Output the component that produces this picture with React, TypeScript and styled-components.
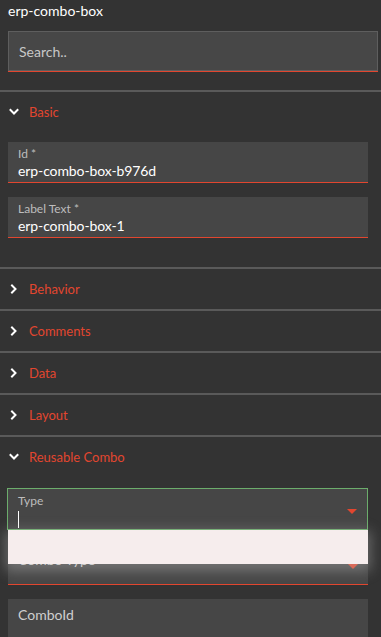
import React from "react";
import { createGlobalStyle, styled } from "styled-components";

const GlobalStyle = createGlobalStyle`
  html, body {
    margin: 0;
    padding: 0;
    background: #333333;
  }
  body {
    font-family: Lato, "Noto Sans", sans-serif;
  }
`;

const RED = "#e2462f";

type SectionProps = {
  title: string;
  open?: boolean;
  children?: React.ReactNode;
};

function Chevron({ open }: { open?: boolean }) {
  return (
    <ChevronIcon width="10" height="10" viewBox="0 0 10 10">
      {open ? (
        <polyline points="1.5,3 5,6.5 8.5,3" />
      ) : (
        <polyline points="3,1.5 6.5,5 3,8.5" />
      )}
    </ChevronIcon>
  );
}

function Section({ title, open, children }: SectionProps) {
  return (
    <SectionWrapper>
      <SectionHeader>
        <Chevron open={open} />
        <SectionTitle>{title}</SectionTitle>
      </SectionHeader>
      {open && <SectionBody>{children}</SectionBody>}
    </SectionWrapper>
  );
}

export default function App() {
  return (
    <Page>
      <GlobalStyle />
      <Top>
        <Title>erp-combo-box</Title>
        <SearchBox>Search..</SearchBox>
      </Top>
      <Section title="Basic" open>
        <Field>
          <FieldLabel>Id *</FieldLabel>
          <FieldValue>erp-combo-box-b976d</FieldValue>
        </Field>
        <Field>
          <FieldLabel>Label Text *</FieldLabel>
          <FieldValue>erp-combo-box-1</FieldValue>
        </Field>
      </Section>
      <Section title="Behavior" />
      <Section title="Comments" />
      <Section title="Data" />
      <Section title="Layout" />
      <Section title="Reusable Combo" open>
        <SelectWrap>
          <FocusedField>
            <FieldLabel>Type</FieldLabel>
            <Caret />
            <DropArrow />
          </FocusedField>
          <DropdownPanel />
        </SelectWrap>
        <Field>
          <Placeholder>Combo Type</Placeholder>
          <DropArrow />
        </Field>
        <Field $plain>
          <Placeholder>ComboId</Placeholder>
        </Field>
      </Section>
    </Page>
  );
}

const Page = styled.div`
  width: 381px;
  height: 637px;
  overflow: hidden;
  background: #333333;
  color: #ffffff;
`;

const Top = styled.div`
  padding: 2px 3px 19px 8px;
`;

const Title = styled.div`
  font-size: 14px;
  line-height: 17px;
  color: #ffffff;
`;

const SearchBox = styled.div`
  margin-top: 12px;
  height: 40px;
  box-sizing: border-box;
  background: #474747;
  border: 1px solid #5e5e5e;
  box-shadow: 0 1px 0 ${RED};
  padding-left: 10px;
  display: flex;
  align-items: center;
  font-size: 14px;
  color: #c8c8c8;
`;

const SectionWrapper = styled.div`
  border-top: 2px solid #5a5a5a;
  &:first-of-type {
    border-top-width: 1px;
  }
`;

const SectionHeader = styled.div`
  height: 40px;
  display: flex;
  align-items: center;
  gap: 10px;
  padding-left: 9px;
`;

const ChevronIcon = styled.svg`
  fill: none;
  stroke: #ffffff;
  stroke-width: 2;
  stroke-linecap: square;
`;

const SectionTitle = styled.span`
  font-size: 13px;
  color: ${RED};
`;

const SectionBody = styled.div`
  display: flex;
  flex-direction: column;
  gap: 14px;
  padding: 10px 13px 29px 8px;
`;

const Field = styled.div<{ $plain?: boolean }>`
  position: relative;
  height: 41px;
  box-sizing: border-box;
  background: #464646;
  padding: 5px 10px 0;
  border-bottom: ${(p) => (p.$plain ? "none" : `1px solid ${RED}`)};
`;

const FocusedField = styled.div`
  position: relative;
  height: 42px;
  margin: 1px 0 0 -1px;
  box-sizing: border-box;
  background: #464646;
  border: 1px solid #6cad6c;
  padding: 5px 10px 0;
`;

const FieldLabel = styled.div`
  font-size: 12px;
  line-height: 14px;
  color: #bdbdbd;
`;

const FieldValue = styled.div`
  font-size: 14px;
  line-height: 19px;
  letter-spacing: -0.1px;
  color: #ffffff;
`;

const Placeholder = styled.div`
  font-size: 14px;
  line-height: 22px;
  color: #cfcfcf;
`;

const Caret = styled.div`
  width: 1px;
  height: 17px;
  margin-top: 3px;
  background: #ffffff;
`;

const DropArrow = styled.div`
  position: absolute;
  right: 10px;
  top: 20px;
  width: 0;
  height: 0;
  border-left: 5px solid transparent;
  border-right: 5px solid transparent;
  border-top: 5px solid ${RED};
`;

const SelectWrap = styled.div`
  position: relative;
`;

const DropdownPanel = styled.div`
  position: absolute;
  left: 0;
  right: 0;
  top: 43px;
  height: 34px;
  background: #f6eded;
  box-shadow: 0 4px 12px 3px rgba(200, 200, 200, 0.35);
  z-index: 2;
`;
